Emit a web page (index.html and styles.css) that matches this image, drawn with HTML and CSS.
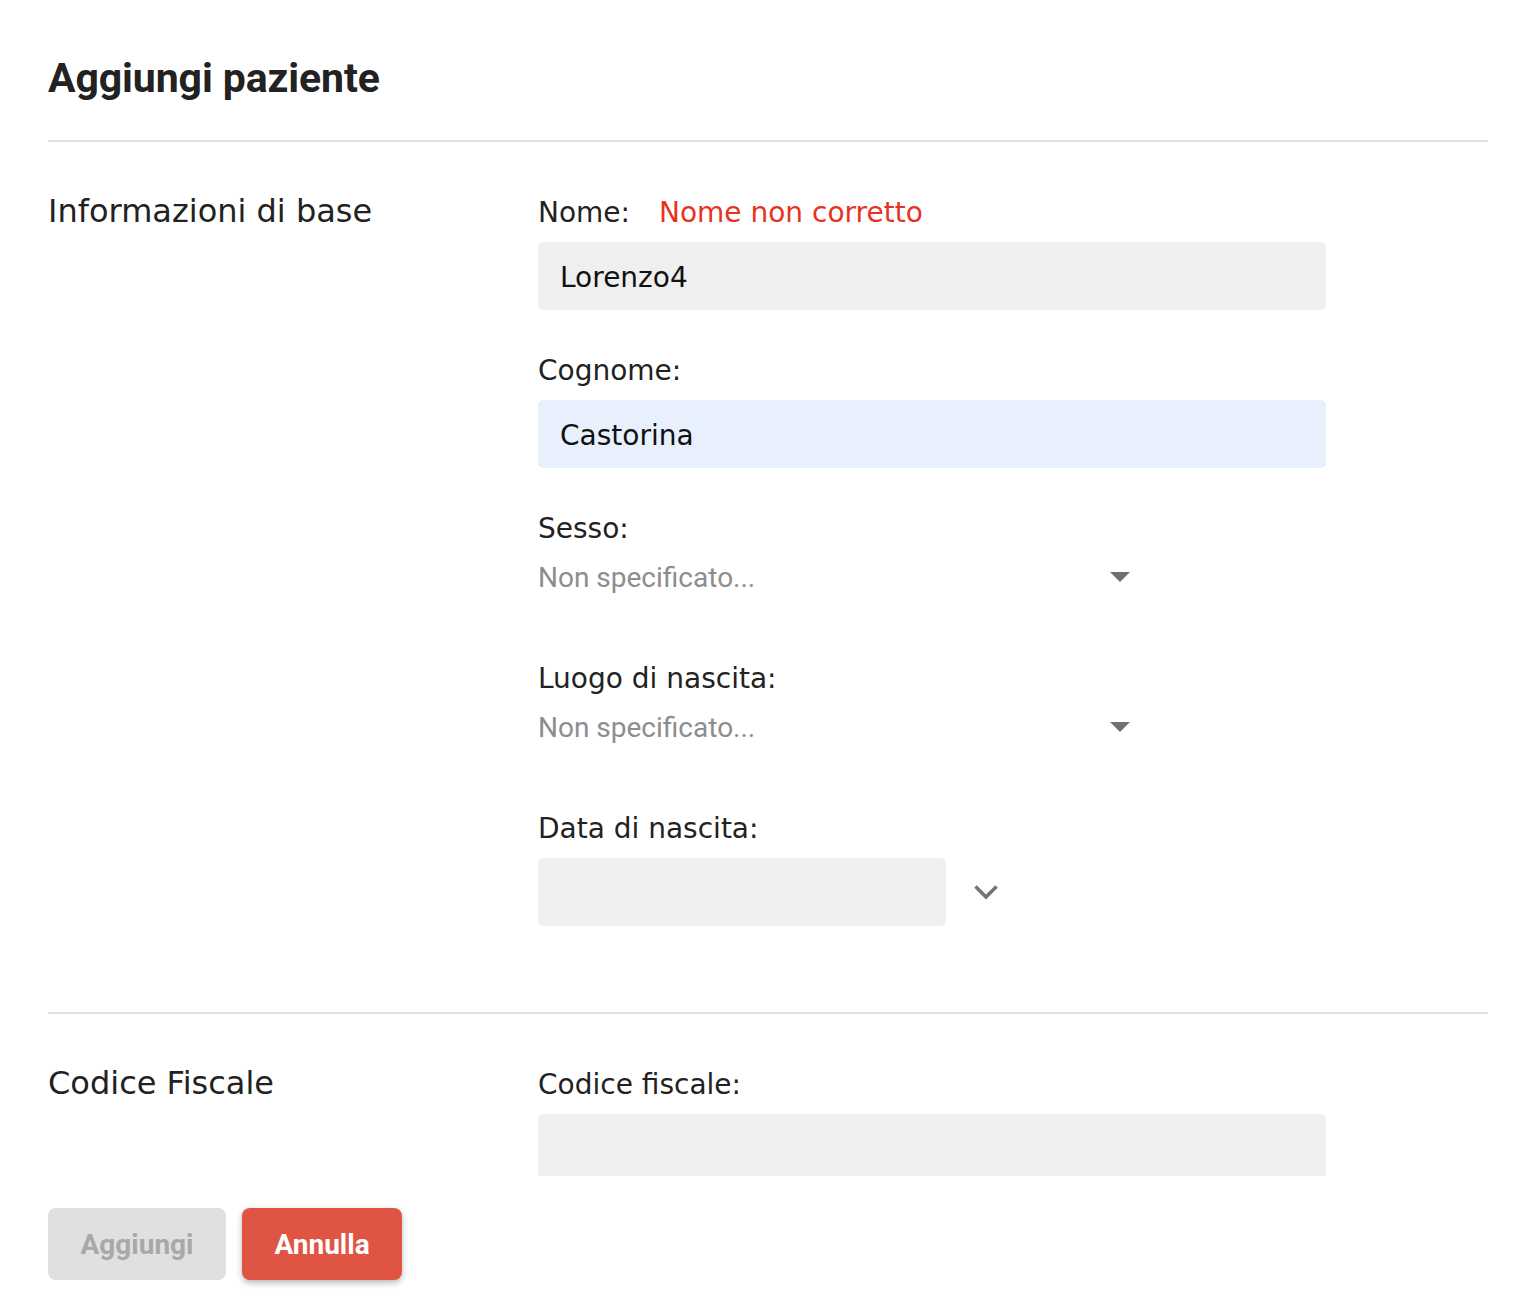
FILE: index.html
```html
<!DOCTYPE html>
<html lang="it">
<head>
<meta charset="utf-8">
<title>Aggiungi paziente</title>
<link rel="stylesheet" href="styles.css">
</head>
<body>
<div class="sheet">
  <header class="sheet-header">
    <h1 class="title">Aggiungi paziente</h1>
  </header>
  <main class="sheet-body">
    <section class="section section-basic">
      <h2 class="section-title">Informazioni di base</h2>
      <div class="fields">
        <div class="field">
          <div class="label">Nome:<span class="error">Nome non corretto</span></div>
          <div class="input">Lorenzo4</div>
        </div>
        <div class="field">
          <div class="label">Cognome:</div>
          <div class="input input-autofill">Castorina</div>
        </div>
        <div class="field">
          <div class="label">Sesso:</div>
          <div class="select"><span class="placeholder">Non specificato...</span><span class="caret"></span></div>
        </div>
        <div class="field">
          <div class="label">Luogo di nascita:</div>
          <div class="select"><span class="placeholder">Non specificato...</span><span class="caret"></span></div>
        </div>
        <div class="field">
          <div class="label">Data di nascita:</div>
          <div class="date-row">
            <div class="input input-date"></div>
            <svg class="chevron" width="26" height="16" viewBox="0 0 26 16"><polyline points="2.5,2.5 13,13 23.5,2.5" fill="none" stroke="#737373" stroke-width="3.5"/></svg>
          </div>
        </div>
      </div>
    </section>
    <section class="section">
      <h2 class="section-title">Codice Fiscale</h2>
      <div class="fields">
        <div class="field">
          <div class="label">Codice fiscale:</div>
          <div class="input"></div>
        </div>
      </div>
    </section>
  </main>
  <footer class="sheet-footer">
    <button class="btn btn-disabled">Aggiungi</button>
    <button class="btn btn-danger">Annulla</button>
  </footer>
</div>
</body>
</html>
```

FILE: styles.css
```css
* { box-sizing: border-box; }
html, body { margin: 0; padding: 0; background: #ffffff; }
body { font-family: "DejaVu Sans", sans-serif; color: #222222; }

.sheet {
  height: 1310px;
  display: flex;
  flex-direction: column;
  padding: 0 46px 0 48px;
}

.sheet-header {
  padding-top: 54px;
  padding-bottom: 38px;
  border-bottom: 2px solid #e2e2e2;
}
.title {
  margin: 0;
  font-family: Roboto, "Liberation Sans", sans-serif;
  font-weight: 700;
  font-size: 41px;
  letter-spacing: -0.1px;
  line-height: 48px;
  color: #222222;
}

.sheet-body {
  flex: 1;
  overflow: hidden;
}

.section {
  display: grid;
  grid-template-columns: 490px 788px;
  padding-top: 48px;
}
.section-basic {
  padding-bottom: 86px;
  border-bottom: 2px solid #e2e2e2;
}

.section-title {
  margin: 0;
  padding-top: 1px;
  font-weight: 400;
  font-size: 32px;
  line-height: 40px;
  color: #222222;
}

.fields { padding-top: 3px; }
.field { margin-bottom: 41px; }
.field:last-child { margin-bottom: 0; }

.label {
  font-size: 28px;
  line-height: 40px;
  margin-bottom: 9px;
  color: #222222;
}
.error {
  color: #e8321f;
  margin-left: 29px;
}

.input {
  height: 68px;
  background: #efefef;
  border-radius: 5px;
  padding: 0 22px;
  font-size: 28px;
  line-height: 71px;
  color: #111111;
}
.input-autofill { background: #e8f0fe; }

.select {
  width: 600px;
  height: 60px;
  display: flex;
  justify-content: space-between;
  align-items: flex-start;
}
.placeholder {
  font-family: Roboto, "Liberation Sans", sans-serif;
  font-size: 28px;
  line-height: 40px;
  color: #8d8d8d;
}
.caret {
  width: 0;
  height: 0;
  margin-top: 14px;
  margin-right: 8px;
  border-left: 10px solid transparent;
  border-right: 10px solid transparent;
  border-top: 10px solid #717171;
}

.date-row {
  display: flex;
  align-items: center;
  gap: 27px;
}
.input-date { width: 408px; }
.chevron { display: block; }

.sheet-footer {
  display: flex;
  gap: 16px;
  padding-top: 32px;
  padding-bottom: 30px;
}
.btn {
  height: 72px;
  border: none;
  border-radius: 8px;
  font-family: Roboto, "Liberation Sans", sans-serif;
  font-weight: 700;
  font-size: 28px;
  padding: 0;
}
.btn-disabled {
  width: 178px;
  background: #e0e0e0;
  color: #a8a8a8;
}
.btn-danger {
  width: 160px;
  background: #e05444;
  color: #ffffff;
  box-shadow: 0 3px 6px rgba(0, 0, 0, 0.28);
}
```
